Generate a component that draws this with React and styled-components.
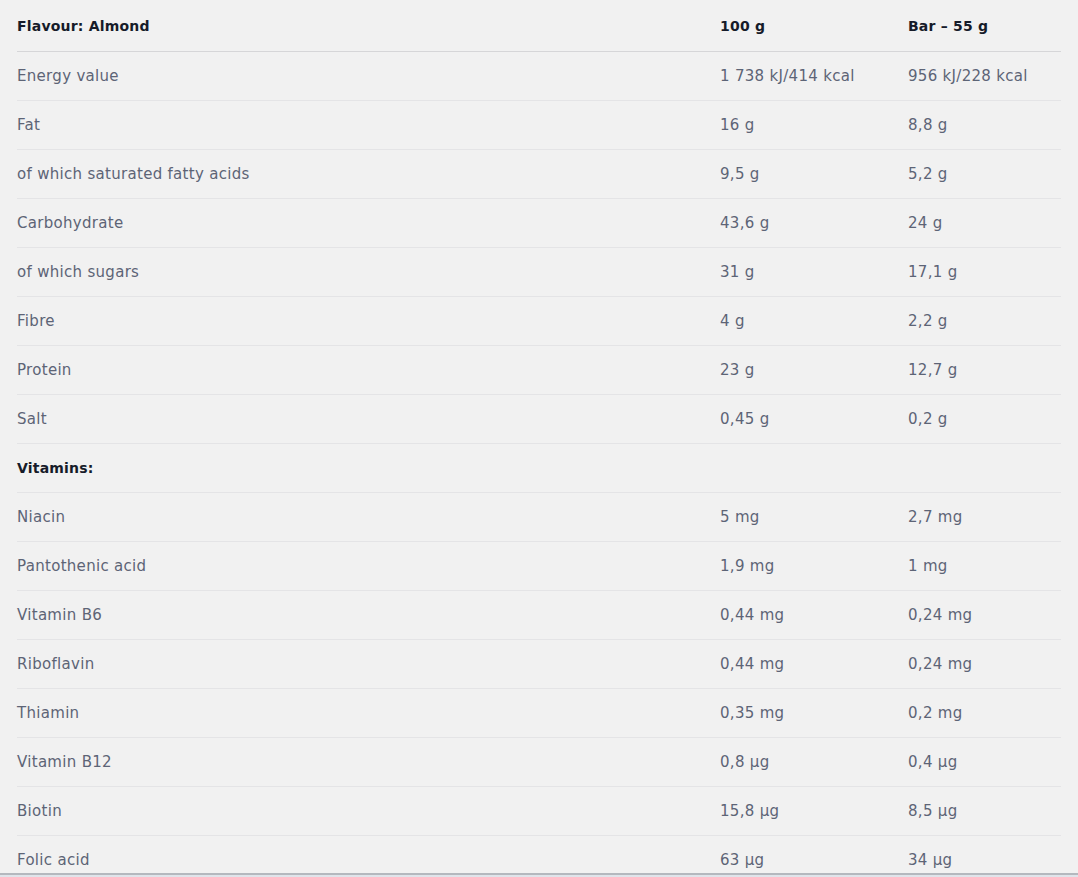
import React from 'react'
import styled, { createGlobalStyle } from 'styled-components'

const GlobalStyle = createGlobalStyle`
    body {
        margin: 0;
        background: #dfe4ea;
        font-family: "DejaVu Sans", "Open Sans", sans-serif;
    }
`;

const rows = [
    { label: 'Energy value', per100: '1 738 kJ/414 kcal', perBar: '956 kJ/228 kcal' },
    { label: 'Fat', per100: '16 g', perBar: '8,8 g' },
    { label: 'of which saturated fatty acids', per100: '9,5 g', perBar: '5,2 g' },
    { label: 'Carbohydrate', per100: '43,6 g', perBar: '24 g' },
    { label: 'of which sugars', per100: '31 g', perBar: '17,1 g' },
    { label: 'Fibre', per100: '4 g', perBar: '2,2 g' },
    { label: 'Protein', per100: '23 g', perBar: '12,7 g' },
    { label: 'Salt', per100: '0,45 g', perBar: '0,2 g' },
    { label: 'Vitamins:', heading: true },
    { label: 'Niacin', per100: '5 mg', perBar: '2,7 mg' },
    { label: 'Pantothenic acid', per100: '1,9 mg', perBar: '1 mg' },
    { label: 'Vitamin B6', per100: '0,44 mg', perBar: '0,24 mg' },
    { label: 'Riboflavin', per100: '0,44 mg', perBar: '0,24 mg' },
    { label: 'Thiamin', per100: '0,35 mg', perBar: '0,2 mg' },
    { label: 'Vitamin B12', per100: '0,8 µg', perBar: '0,4 µg' },
    { label: 'Biotin', per100: '15,8 µg', perBar: '8,5 µg' },
    { label: 'Folic acid', per100: '63 µg', perBar: '34 µg' },
]

export default function App() {
    return (
        <>
            <GlobalStyle />
            <Panel>
                <Table>
                    <colgroup>
                        <col style={{ width: 703 }} />
                        <col style={{ width: 188 }} />
                        <col style={{ width: 153 }} />
                    </colgroup>
                    <thead>
                        <HeadRow>
                            <Th>Flavour: Almond</Th>
                            <Th>100 g</Th>
                            <Th>Bar – 55 g</Th>
                        </HeadRow>
                    </thead>
                    <tbody>
                        {rows.map((r) => (
                            <Row key={r.label}>
                                <Td $bold={r.heading}>{r.label}</Td>
                                <Td>{r.per100}</Td>
                                <Td>{r.perBar}</Td>
                            </Row>
                        ))}
                    </tbody>
                </Table>
            </Panel>
        </>
    )
}

const Panel = styled.div`
    height: 873px;
    overflow: hidden;
    background: #f1f1f1;
    border-bottom: 2px solid #b4b8be;
    padding: 0 17px;
`;
const Table = styled.table`
    width: 1044px;
    border-collapse: collapse;
    table-layout: fixed;
`;
const HeadRow = styled.tr`
    height: 51px;
    border-bottom: 1px solid #d6d6d8;
`;
const Th = styled.th`
    padding: 2px 0 0;
    text-align: left;
    font-size: 14px;
    letter-spacing: 0.2px;
    font-weight: 700;
    color: #161b29;
    vertical-align: middle;
`;
const Row = styled.tr`
    height: 49px;
    border-bottom: 1px solid #e4e4e6;
`;
const Td = styled.td`
    padding: 0;
    font-size: ${(p) => (p.$bold ? '14px' : '15px')};
    letter-spacing: ${(p) => (p.$bold ? '0.2px' : '0.3px')};
    font-weight: ${(p) => (p.$bold ? 700 : 400)};
    color: ${(p) => (p.$bold ? '#161b29' : '#5d6476')};
    vertical-align: middle;
`;
